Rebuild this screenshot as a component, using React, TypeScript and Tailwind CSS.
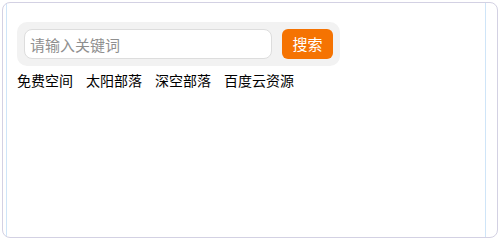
const links = ["免费空间", "太阳部落", "深空部落", "百度云资源"];

export default function App() {
  return (
    <div
      className="w-[500px] h-[240px] bg-white p-[2px]"
      style={{ fontFamily: '"Noto Sans CJK SC", "Liberation Sans", sans-serif' }}
    >
      <div className="h-full rounded-[8px] border border-[#d3d1e3] overflow-hidden">
        <div className="ml-[3px] h-full w-[480px] border-l border-r border-[#cfe5f8] pl-[10px] pt-[19px]">
          <div className="flex w-[323px] items-center gap-[10px] rounded-[10px] bg-[#f2f2f2] p-[7px]">
            <input
              className="h-[30px] w-[248px] rounded-[8px] border border-[#dddddd] bg-white px-[5px] text-[15px] text-[#333] outline-none placeholder:text-[#8f8f8f]"
              placeholder="请输入关键词"
            />
            <button className="h-[30px] w-[51px] rounded-[6px] bg-[#f57302] text-[15px] text-white">
              搜索
            </button>
          </div>
          <div className="mt-[4px] flex gap-[13px] text-[14px] leading-[20px] text-black">
            {links.map((l) => (
              <a key={l} href="#" className="text-black">
                {l}
              </a>
            ))}
          </div>
        </div>
      </div>
    </div>
  );
}
